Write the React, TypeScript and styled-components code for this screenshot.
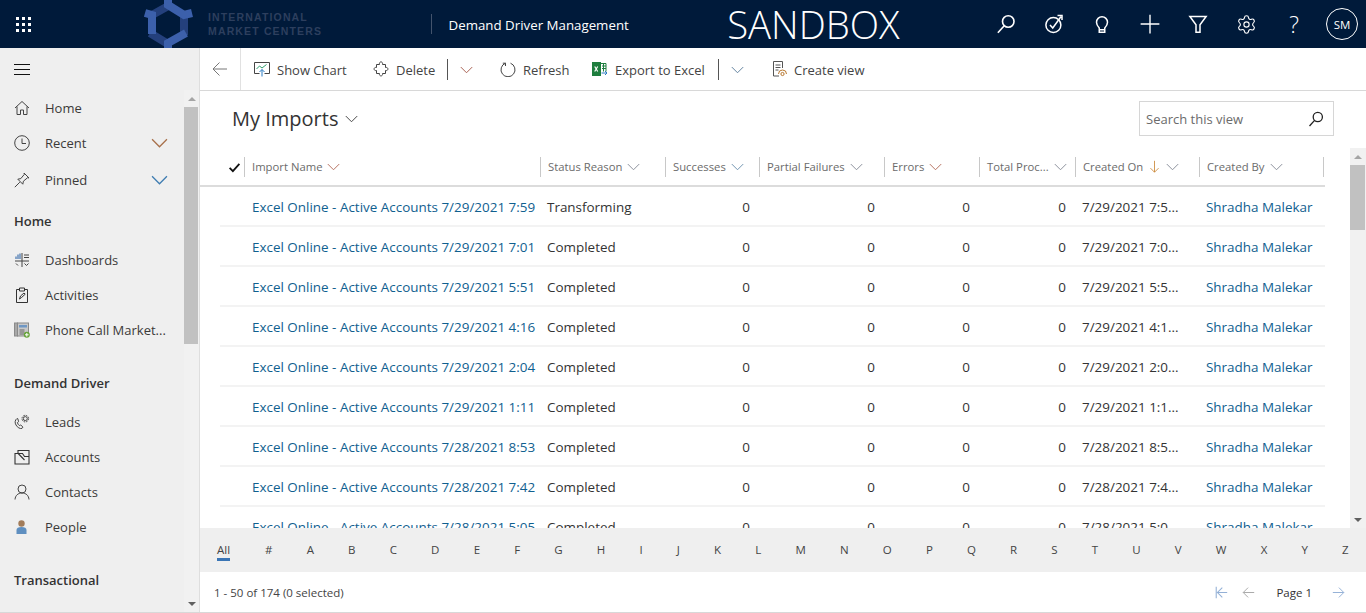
import * as React from 'react';
import styled, { createGlobalStyle } from 'styled-components';
import { Settings } from 'lucide-react';

const GlobalStyle = createGlobalStyle`
  html, body { margin: 0; padding: 0; height: 100%; overflow: hidden; background: #fff; }
  * { box-sizing: border-box; }
  body { font-family: "Open Sans", "Liberation Sans", sans-serif; color: #333; }
`;

const Page = styled.div`
  display: flex;
  flex-direction: column;
  width: 1366px;
  height: 613px;
  overflow: hidden;
`;

/* top bar */
const TopBar = styled.header`
  display: flex;
  align-items: center;
  flex: 0 0 48px;
  height: 48px;
  background: #001a3a;
  color: #fff;
`;
const Waffle = styled.div`
  display: grid;
  grid-template-columns: repeat(3, 3px);
  grid-auto-rows: 3px;
  gap: 3px;
  margin-left: 16px;
  span { background: #fff; }
`;
const Brand = styled.div`
  display: flex;
  align-items: center;
  margin-left: 111px;
  width: 291px;
`;
const BrandName = styled.div`
  margin-left: 14px;
  font-family: "Liberation Sans", sans-serif;
  font-size: 10.5px;
  line-height: 14px;
  font-weight: 700;
  letter-spacing: 1.15px;
  color: #2d3f5e;
`;
const AppTitle = styled.div`
  border-left: 1px solid #43536c;
  height: 20px;
  line-height: 22px;
  padding-left: 17px;
  width: 299px;
  margin-top: -1px;
  font-size: 13.3px;
  font-weight: 500;
  white-space: nowrap;
`;
const Sandbox = styled.div`
  width: 257px;
  height: 48px;
  padding-top: 1px;
  font-family: "Open Sans", sans-serif;
  font-weight: 300;
  font-size: 38.3px;
  line-height: 47px;
  white-space: nowrap;
`;
const TopIcons = styled.div`
  display: flex;
  align-items: center;
  margin-left: auto;
`;
const TopIcon = styled.div`
  display: flex;
  width: 48px;
  height: 48px;
  align-items: center;
  justify-content: center;
  font-size: 23px;
  font-weight: 300;
`;
const Avatar = styled.div`
  width: 32px;
  height: 32px;
  border: 1px solid #fff;
  border-radius: 50%;
  margin: 0 8px;
  display: flex;
  align-items: center;
  justify-content: center;
  font-size: 11.5px;
`;

/* shell */
const Shell = styled.div`
  display: flex;
  flex: 1;
  min-height: 0;
  border-bottom: 1px solid #d8d8d8;
`;
const Sidebar = styled.aside`
  display: flex;
  flex-direction: column;
  flex: 0 0 200px;
  background: #efefef;
  border-right: 1px solid #dedede;
  overflow: hidden;
`;
const Burger = styled.div`
  flex: 0 0 42px;
  display: flex;
  flex-direction: column;
  gap: 4px;
  padding: 16px 0 0 14px;
  span { display: block; width: 16px; height: 1px; background: #111; }
`;
const SideBody = styled.div`
  display: flex;
  flex: 1;
  min-height: 0;
`;
const Nav = styled.nav`
  flex: 0 0 184px;
  overflow: hidden;
`;
const NavRow = styled.div<{ $mt?: number }>`
  display: flex;
  align-items: center;
  height: 35px;
  padding-left: 14px;
  margin-top: ${p => p.$mt ?? 0}px;
  font-size: 13px;
  color: #3b3a39;
`;
const NavIcon = styled.span`
  flex: 0 0 31px;
  display: flex;
  align-items: center;
`;
const NavLabel = styled.span`
  flex: 1;
  white-space: nowrap;
`;
const NavChevron = styled.span`
  display: flex;
  margin-right: 16px;
`;
const NavHeading = styled.div<{ $mt: number }>`
  display: flex;
  align-items: center;
  height: 35px;
  padding-left: 14px;
  margin-top: ${p => p.$mt}px;
  font-size: 13px;
  font-weight: 600;
  color: #333;
`;
const ScrollTrack = styled.div<{ $width: number }>`
  flex: 0 0 ${p => p.$width}px;
  display: flex;
  flex-direction: column;
  align-items: stretch;
  background: #f1f1f1;
`;
const ScrollArrow = styled.div<{ $down?: boolean }>`
  flex: 0 0 17px;
  display: flex;
  align-items: center;
  justify-content: center;
  &::before {
    content: '';
    border-left: 4px solid transparent;
    border-right: 4px solid transparent;
    ${p => (p.$down ? 'border-top: 4px solid #606060;' : 'border-bottom: 4px solid #a5a5a5;')}
  }
`;
const ScrollThumb = styled.div<{ $h: number }>`
  flex: 0 0 ${p => p.$h}px;
  margin-right: 1px;
  background: #c1c1c1;
`;
const ScrollGap = styled.div`
  flex: 1;
`;

/* content */
const Main = styled.main`
  display: flex;
  flex-direction: column;
  flex: 1;
  min-width: 0;
`;
const Toolbar = styled.div`
  display: flex;
  align-items: center;
  flex: 0 0 43px;
  border-bottom: 1px solid #d8d8d8;
  font-size: 13px;
  color: #444;
`;
const BackButton = styled.div`
  display: flex;
  align-items: center;
  justify-content: center;
  width: 41px;
  height: 42px;
  border-right: 1px solid #e1e1e1;
`;
const Tool = styled.div<{ $w: number }>`
  display: flex;
  align-items: center;
  gap: 7px;
  width: ${p => p.$w}px;
  white-space: nowrap;
`;
const ToolText = styled.span`
  padding-top: 2px;
`;
const ToolSplit = styled.div<{ $w: number }>`
  display: flex;
  align-items: center;
  justify-content: center;
  width: ${p => p.$w}px;
  height: 21px;
  border-left: 1px solid #555;
  padding-right: 16px;
`;
const ToolIcons = styled.div`
  display: flex;
  align-items: center;
  padding-left: 13px;
`;
const ViewHeader = styled.div`
  display: flex;
  align-items: flex-start;
  justify-content: space-between;
  flex: 0 0 57px;
  padding: 10px 32px 0 32px;
`;
const ViewTitle = styled.div`
  display: flex;
  align-items: center;
  gap: 7px;
  height: 34px;
  font-size: 20px;
  font-weight: 500;
  color: #333;
`;
const SearchBox = styled.div`
  display: flex;
  align-items: center;
  justify-content: space-between;
  width: 195px;
  height: 35px;
  padding: 0 9px 0 6px;
  border: 1px solid #d6d6d6;
  font-size: 13px;
  color: #6b6b6b;
`;
const GridArea = styled.div`
  display: flex;
  flex: 1;
  min-height: 0;
`;
const GridWrap = styled.div`
  flex: 0 0 1150px;
  display: flex;
  flex-direction: column;
  min-height: 0;
`;
const HeaderRow = styled.div`
  display: grid;
  grid-template-columns: 44px 296px 125px 94px 125px 95px 96px 124px 125px;
  flex: 0 0 39px;
  width: 1125px;
  padding: 9px 0 8px;
  border-bottom: 2px solid #dcdcdc;
`;
const HeaderCheck = styled.div`
  display: flex;
  justify-content: flex-end;
  align-items: center;
  padding-right: 3px;
`;
const HeaderCell = styled.div`
  display: flex;
  align-items: center;
  gap: 5px;
  padding: 0 0 2px 7px;
  border-left: 1px solid #c8c8c8;
  font-size: 11.3px;
  color: #6b6b6b;
  white-space: nowrap;
  &:last-child { border-right: 1px solid #c8c8c8; }
`;
const Rows = styled.div`
  flex: 1;
  min-height: 0;
  overflow: hidden;
`;
const Row = styled.div`
  display: grid;
  grid-template-columns: 25px 295px 125px 94px 125px 95px 96px 124px 125px;
  align-items: center;
  height: 40px;
  width: 1105px;
  margin-left: 20px;
  padding-top: 2px;
  border-bottom: 2px solid #f3f3f3;
  font-size: 13.45px;
`;
const Cell = styled.div`
  padding-left: 7px;
  white-space: nowrap;
  overflow: hidden;
  color: #333;
`;
const LinkCell = styled(Cell)`
  color: #10608f;
`;
const NumCell = styled(Cell)`
  padding-right: 9px;
  text-align: right;
`;
const MainScroll = styled(ScrollTrack)`
  margin-left: auto;
`;
const Alphabet = styled.div`
  display: flex;
  align-items: flex-start;
  flex: 0 0 44px;
  background: #efefef;
  padding: 14px 0 0 17px;
  font-size: 11.5px;
  color: #444;
  white-space: nowrap;
`;
const AllLetter = styled.div`
  flex: 0 0 31px;
  span {
    display: inline-block;
    padding-bottom: 1px;
    border-bottom: 3px solid #3a75b5;
  }
`;
const Letter = styled.div`
  padding: 0 17.08px;
`;
const Footer = styled.div`
  display: flex;
  align-items: center;
  justify-content: space-between;
  flex: 0 0 40px;
  padding: 0 21px 0 14px;
  font-size: 11.5px;
  color: #444;
`;
const Pager = styled.div`
  display: flex;
  align-items: center;
  gap: 14px;
`;
const PageLabel = styled.span`
  margin: 0 6px 0 7px;
  color: #333;
`;

/* icons */
const Svg: React.FC<{ s?: number; c?: string; w?: number; children: React.ReactNode }> = ({ s = 16, c = '#333', w = 1, children }) => (
  <svg width={s} height={s} viewBox="0 0 16 16" fill="none" stroke={c} strokeWidth={w} style={{ display: 'block', flex: 'none' }}>
    {children}
  </svg>
);

const Chevron: React.FC<{ s?: number; c?: string }> = ({ s = 13, c = '#777' }) => (
  <Svg s={s} c={c} w={1.2}><path d="M1 5l7 7 7-7" /></Svg>
);

const Logo = () => (
  <svg width="52" height="48" viewBox="0 0 52 48" fill="none" strokeWidth="8" style={{ display: 'block' }}>
    <g stroke="#24407c">
      <path d="M42 13V35" />
      <path d="M26 44L8 33" />
      <path d="M10 15L28 5" />
    </g>
    <g stroke="#3c60ab">
      <path d="M26 -2V5L42 15L50 13" />
      <path d="M44 33L26 43V50" />
      <path d="M10 34V15L3 13" />
    </g>
  </svg>
);

const SearchIcon: React.FC<{ c?: string; s?: number }> = ({ c = '#fff', s = 20 }) => (
  <Svg s={s} c={c} w={1.3}><circle cx="9.8" cy="6" r="4.6" /><path d="M6.6 9.4L1.5 15" /></Svg>
);

const people = 'Shradha Malekar';
const rows = [
  ['7/29/2021 7:59', 'Transforming', '7/29/2021 7:5...'],
  ['7/29/2021 7:01', 'Completed', '7/29/2021 7:0...'],
  ['7/29/2021 5:51', 'Completed', '7/29/2021 5:5...'],
  ['7/29/2021 4:16', 'Completed', '7/29/2021 4:1...'],
  ['7/29/2021 2:04', 'Completed', '7/29/2021 2:0...'],
  ['7/29/2021 1:11', 'Completed', '7/29/2021 1:1...'],
  ['7/28/2021 8:53', 'Completed', '7/28/2021 8:5...'],
  ['7/28/2021 7:42', 'Completed', '7/28/2021 7:4...'],
  ['7/28/2021 5:05', 'Completed', '7/28/2021 5:0...'],
];

const letters = '#ABCDEFGHIJKLMNOPQRSTUVWXYZ'.split('');

export default function App() {
  return (
    <Page>
      <GlobalStyle />
      <TopBar>
        <Waffle>{Array.from({ length: 9 }, (_, i) => <span key={i} />)}</Waffle>
        <Brand>
          <Logo />
          <BrandName>INTERNATIONAL<br />MARKET CENTERS</BrandName>
        </Brand>
        <AppTitle>Demand Driver Management</AppTitle>
        <Sandbox>SANDBOX</Sandbox>
        <TopIcons>
          <TopIcon><SearchIcon /></TopIcon>
          <TopIcon>
            <Svg s={20} c="#fff" w={1.2}><circle cx="7.5" cy="8.8" r="6" /><path d="M4.8 8.800l2.200 2.400 6.500-9M10.800 1.200h3.600v3.600" /></Svg>
          </TopIcon>
          <TopIcon>
            <Svg s={20} c="#fff" w={1.2}><path d="M5.800 11.200C4.400 9.800 3.600 8.400 3.600 6.600a4.400 4.400 0 0 1 8.800 0c0 1.800-.8 3.200-2.200 4.600v3.300H5.800zM5.800 12.600h4.400" /></Svg>
          </TopIcon>
          <TopIcon>
            <Svg s={20} c="#fff" w={1.1}><path d="M8 .5v15M.5 8h15" /></Svg>
          </TopIcon>
          <TopIcon>
            <Svg s={20} c="#fff" w={1.2}><path d="M1.500 2h13L9.600 8.600v6H6.400V8.600z" /></Svg>
          </TopIcon>
          <TopIcon><Settings size={21} strokeWidth={1.25} color="#fff" /></TopIcon>
          <TopIcon>?</TopIcon>
          <Avatar>SM</Avatar>
        </TopIcons>
      </TopBar>
      <Shell>
        <Sidebar>
          <Burger><span /><span /><span /></Burger>
          <SideBody>
            <Nav>
              <NavRow>
                <NavIcon><Svg c="#444"><path d="M1 8l7-6.500L15 8M3 6.500V14.500h3.500V10h3v4.500H13V6.500" /></Svg></NavIcon>
                <NavLabel>Home</NavLabel>
              </NavRow>
              <NavRow>
                <NavIcon><Svg c="#444"><circle cx="8" cy="8" r="7.300" /><path d="M8 3.500V8.500H12" /></Svg></NavIcon>
                <NavLabel>Recent</NavLabel>
                <NavChevron><Chevron s={17} c="#a8704a" /></NavChevron>
              </NavRow>
              <NavRow $mt={2}>
                <NavIcon><Svg c="#444"><path d="M.8 15.200l5-5M3.800 7.200l3-.6 3.500-4.200L10 1l5 5-1.400-.3-4.200 3.500-.6 3z" /></Svg></NavIcon>
                <NavLabel>Pinned</NavLabel>
                <NavChevron><Chevron s={17} c="#3e7cb1" /></NavChevron>
              </NavRow>
              <NavHeading $mt={6}>Home</NavHeading>
              <NavRow $mt={4}>
                <NavIcon>
                  <Svg c="#444">
                    <path d="M1 9h14M8 1v14M10 3h5M10 5.500h5" />
                    <path d="M2 7V4.500M4 7V2.500M6 7V1.500" stroke="#5b85b8" strokeWidth="1.400" />
                    <path d="M2 11.500l2 2M10.500 11.500l2 2 2-2" />
                  </Svg>
                </NavIcon>
                <NavLabel>Dashboards</NavLabel>
              </NavRow>
              <NavRow>
                <NavIcon><Svg c="#333"><path d="M5 2.500H2.500v13h11v-13H11M5.500 1h5v3h-5zM5.500 12l1-3 3.500-3 1.200 1.200-3.500 3.200z" /></Svg></NavIcon>
                <NavLabel>Activities</NavLabel>
              </NavRow>
              <NavRow>
                <NavIcon>
                  <Svg c="#8a8a8a">
                    <rect x="0.5" y="1" width="3" height="13" fill="#a8a8a8" />
                    <rect x="3.5" y="1" width="11" height="13" fill="#c8c8c8" />
                    <rect x="5" y="3" width="8" height="2.500" fill="#6f97c4" stroke="none" />
                    <path d="M5.500 8h5M5.500 10h5M5.500 12h5" stroke="#666" />
                    <circle cx="12.800" cy="12.800" r="3" fill="#67a33a" stroke="none" />
                    <path d="M12.800 11v3.600M11 12.800h3.600" stroke="#fff" />
                  </Svg>
                </NavIcon>
                <NavLabel>Phone Call Market...</NavLabel>
              </NavRow>
              <NavHeading $mt={18}>Demand Driver</NavHeading>
              <NavRow $mt={4}>
                <NavIcon>
                  <Svg c="#444"><path d="M3 4.500C1 6 .5 8.500 2 11c1.500 2.600 4 4 6 3.400l.9-1.300-2.200-2.200-1.300.7c-1-.7-1.700-1.800-2-3l1.200-.9-.8-3z" /><circle cx="11.300" cy="4.600" r="2" /><circle cx="11.300" cy="4.600" r="3.300" strokeDasharray="1.600 1" /></Svg>
                </NavIcon>
                <NavLabel>Leads</NavLabel>
              </NavRow>
              <NavRow>
                <NavIcon><Svg c="#333" w={1.1}><path d="M1 4.500h7.500l2 3H15v7.500H1zM4 4.500V1.500h11v13M1 4.500V9M4.200 4.500l6.300 6.500" /></Svg></NavIcon>
                <NavLabel>Accounts</NavLabel>
              </NavRow>
              <NavRow>
                <NavIcon><Svg c="#444"><circle cx="8" cy="5" r="4" /><path d="M1 15.500c.3-4 3-6.500 7-6.500s6.700 2.500 7 6.500" /></Svg></NavIcon>
                <NavLabel>Contacts</NavLabel>
              </NavRow>
              <NavRow>
                <NavIcon>
                  <Svg c="none">
                    <circle cx="7.500" cy="4.500" r="3.200" fill="#a27c5a" />
                    <path d="M2.500 15V11c0-2 1.800-3 5-3s5 1 5 3v4z" fill="#5f8fc0" />
                  </Svg>
                </NavIcon>
                <NavLabel>People</NavLabel>
              </NavRow>
              <NavHeading $mt={18}>Transactional</NavHeading>
              <NavRow $mt={4}>
                <NavIcon><Svg c="none"><rect x="0" y="1" width="15" height="15" fill="#5f9140" /></Svg></NavIcon>
              </NavRow>
            </Nav>
            <ScrollTrack $width={15}>
              <ScrollArrow />
              <ScrollThumb $h={237} />
              <ScrollGap />
              <ScrollArrow $down />
            </ScrollTrack>
          </SideBody>
        </Sidebar>
        <Main>
          <Toolbar>
            <BackButton>
              <Svg c="#777"><path d="M15 8H1M7.500 1.500L1 8l6.500 6.500" /></Svg>
            </BackButton>
            <ToolIcons>
              <Tool $w={119}>
                <Svg c="#444"><path d="M.5 1.500h15v11h-5M5.500 12.500h-5v-11" /><path d="M2.500 8l3-3 2.500 2 4.500-3.500" stroke="#2f9e6e" /><path d="M8 15.500V8.500M5.500 11L8 8.500l2.500 2.500" stroke="#2b7cc4" /></Svg>
                <ToolText>Show Chart</ToolText>
              </Tool>
              <Tool $w={74}>
                <Svg c="#444"><path d="M3.500 3.500h3c-.8-3.500 3.800-3.500 3 0h3v3c3.200-.8 3.200 3.800 0 3v3h-3c.8 3.200-3.800 3.200-3 0h-3v-3c-3.200.8-3.200-3.800 0-3z" /></Svg>
                <ToolText>Delete</ToolText>
              </Tool>
              <ToolSplit $w={53}><Chevron c="#a85f50" /></ToolSplit>
              <Tool $w={92}>
                <Svg c="#444"><path d="M5.500 2.200A7 7 0 1 0 10.500 2.200M5.500 2.200V5M5.500 2.200H2.800" /></Svg>
                <ToolText>Refresh</ToolText>
              </Tool>
              <Tool $w={126}>
                <Svg c="#1e7e3e">
                  <rect x="0.500" y="1.500" width="8" height="13" fill="#1e7e3e" />
                  <path d="M8.500 2.500h5.500v8M10 5h4M10 7.500h4M11.500 2.500v8" />
                  <path d="M2.700 5.500l3 5M5.700 5.500l-3 5" stroke="#fff" strokeWidth="1.200" />
                  <path d="M9.500 12h5.500M13 10l2 2-2 2" stroke="#2b7cc4" />
                </Svg>
                <ToolText>Export to Excel</ToolText>
              </Tool>
              <ToolSplit $w={53}><Chevron c="#5f7f9c" /></ToolSplit>
              <Tool $w={110}>
                <Svg c="#555"><path d="M8 15H2.500V.5h9V7M4.500 4h5M4.500 6.500h5M4.500 9h3" /><circle cx="11.500" cy="13" r="1.600" stroke="#b8772e" /><path d="M7.500 13a4 4 0 0 1 8 0" stroke="#b8772e" /></Svg>
                <ToolText>Create view</ToolText>
              </Tool>
            </ToolIcons>
          </Toolbar>
          <ViewHeader>
            <ViewTitle>My Imports <Chevron c="#444" /></ViewTitle>
            <SearchBox>Search this view <SearchIcon c="#222" s={16} /></SearchBox>
          </ViewHeader>
          <GridArea>
            <GridWrap>
              <HeaderRow>
                <HeaderCheck>
                  <Svg s={13} c="#111" w={2.200}><path d="M2 8.500l4 4L14 3.500" /></Svg>
                </HeaderCheck>
                <HeaderCell>Import Name <Chevron c="#b5705f" /></HeaderCell>
                <HeaderCell>Status Reason <Chevron c="#8a8f9a" /></HeaderCell>
                <HeaderCell>Successes <Chevron c="#6f93b0" /></HeaderCell>
                <HeaderCell>Partial Failures <Chevron c="#8a8f9a" /></HeaderCell>
                <HeaderCell>Errors <Chevron c="#b5705f" /></HeaderCell>
                <HeaderCell>Total Proc... <Chevron c="#8a8f9a" /></HeaderCell>
                <HeaderCell>
                  Created On
                  <Svg s={13} c="#c9822f"><path d="M8 1v14M3 10l5 5 5-5" /></Svg>
                  <Chevron c="#8a8f9a" />
                </HeaderCell>
                <HeaderCell>Created By <Chevron c="#8a8f9a" /></HeaderCell>
              </HeaderRow>
              <Rows>
                {rows.map(r => (
                  <Row key={r[0]}>
                    <span />
                    <LinkCell>Excel Online - Active Accounts {r[0]}</LinkCell>
                    <Cell>{r[1]}</Cell>
                    <NumCell>0</NumCell>
                    <NumCell>0</NumCell>
                    <NumCell>0</NumCell>
                    <NumCell>0</NumCell>
                    <Cell>{r[2]}</Cell>
                    <LinkCell>{people}</LinkCell>
                  </Row>
                ))}
              </Rows>
            </GridWrap>
            <MainScroll $width={16}>
              <ScrollArrow />
              <ScrollThumb $h={65} />
              <ScrollGap />
              <ScrollArrow $down />
            </MainScroll>
          </GridArea>
          <Alphabet>
            <AllLetter><span>All</span></AllLetter>
            {letters.map(l => <Letter key={l}>{l}</Letter>)}
          </Alphabet>
          <Footer>
            <span>1 - 50 of 174 (0 selected)</span>
            <Pager>
              <Svg s={13} c="#93b0d6" w={1.300}><path d="M1.500 1v14M15 8H3M9 2L3 8l6 6" /></Svg>
              <Svg s={13} c="#a9a9a9" w={1.200}><path d="M15 8H1.500M7.500 2L1.500 8l6 6" /></Svg>
              <PageLabel>Page 1</PageLabel>
              <Svg s={13} c="#93b0d6" w={1.200}><path d="M1 8h13.500M8.500 2l6 6-6 6" /></Svg>
            </Pager>
          </Footer>
        </Main>
      </Shell>
    </Page>
  );
}
